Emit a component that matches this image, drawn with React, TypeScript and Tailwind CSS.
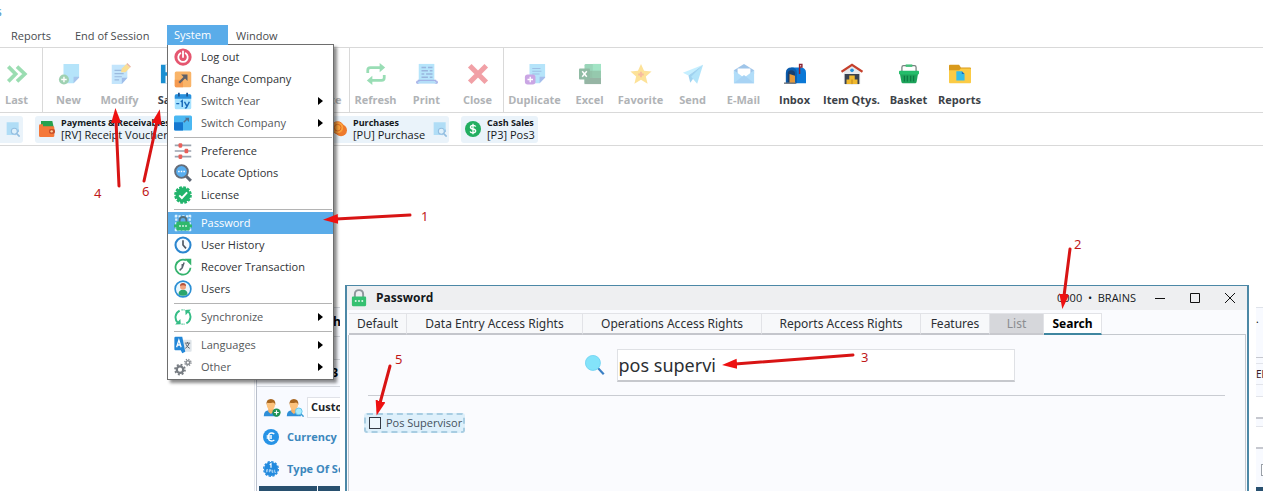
import React from "react";

type Kids = { children: React.ReactNode };

function Svg({ children, className = "size-[22px]" }: Kids & { className?: string }) {
  return (
    <svg viewBox="0 0 24 24" fill="none" className={`shrink-0 ${className}`} aria-hidden="true">
      {children}
    </svg>
  );
}

const sheet = "M4 2h18v13.5L16.5 21H4z";

/* ---------- Toolbar icons ---------- */

const LastIcon = () => (
  <Svg>
    <path d="M2.5 4 10.500 12l-8 8M12 4l8.500 8-8.500 8" stroke="#22b455" strokeWidth="4" />
  </Svg>
);
const NewIcon = () => (
  <Svg>
    <path d="M6 1h17v14l-6 7H6z" fill="#5cc5f5" />
    <path d="M23 15v1l-6 6v-7z" fill="#3b7fd6" />
    <circle cx="6.500" cy="18" r="5.500" fill="#2b9a55" />
    <path d="M6.500 15v6M3.500 18h6" stroke="#fff" strokeWidth="1.500" />
  </Svg>
);
const ModifyIcon = () => (
  <Svg>
    <path d="M3 2h17v14l-6 7H3z" fill="#7cc6fa" />
    <path d="M20 16l-6 7v-7z" fill="#2f6fd0" />
    <path d="M6 8h9M6 11.500h10M6 15h8M6 18.500h5" stroke="#2467b8" strokeWidth="1.300" />
    <path d="m13 10 1-4 5-5 4 4-5 5z" fill="#f4b916" />
    <path d="m19 1 1-1 4 4-1 1z" fill="#d0542f" />
  </Svg>
);
const SaveIcon = () => (
  <Svg>
    <path d="M1 2h19l3 3v17H1z" fill="#1a8fd1" />
    <path d="M6 2h12v8H6zM6 14h12v8H6z" fill="#fff" />
  </Svg>
);
const DeleteIcon = () => (
  <Svg>
    <path d="M4 6h16l-1.500 16h-13zM3 3h18v2H3z" fill="#e1453f" />
  </Svg>
);
const RefreshIcon = () => (
  <Svg>
    <path d="M3 11V8q0-3 3-3h12M21 13v3q0 3-3 3H6" stroke="#1fb65c" strokeWidth="3" />
    <path d="m16 0 6 5-6 5zM8 14l-6 5 6 5z" fill="#1fb65c" />
  </Svg>
);
const PrintIcon = () => (
  <Svg>
    <path d="M3 1h17v20H3z" fill="#5fc6f8" />
    <path d="M6 5h5M13 5h5M6 8.500h7M15 8.500h3M6 12h3M11 12h7M6 15.500h7M15 15.500h3" stroke="#1f5db5" strokeWidth="1.600" />
    <path d="M2 19h20" stroke="#3158c9" strokeWidth="1.500" />
    <circle cx="2" cy="21" r="2" fill="#4c5fcf" />
    <circle cx="22" cy="21" r="2" fill="#4c5fcf" />
    <path d="M2 21.500h20" stroke="#58b6f0" strokeWidth="2" />
  </Svg>
);
const CloseIcon = () => (
  <Svg>
    <path d="m3 3 18 18M21 3 3 21" stroke="#e22f3b" strokeWidth="5.500" />
  </Svg>
);
const DuplicateIcon = () => (
  <Svg>
    <path d="M6 1h17v14l-6 7H6z" fill="#5cc5f5" />
    <path d="M23 15v1l-6 6v-7z" fill="#3b6fd6" />
    <path d="M9 6h9M9 9h10M9 12h8" stroke="#2a73c4" strokeWidth="1.200" />
    <rect x="1" y="12.500" width="11.500" height="11" rx="3" fill="#8c3bc4" />
    <path d="M6.800 15v6M3.800 18h6" stroke="#fff" strokeWidth="1.500" />
  </Svg>
);
const ExcelIcon = () => (
  <Svg>
    <rect x="6" y="1" width="18" height="22" rx="1.500" fill="#21a366" />
    <path d="M15 1h9v7.500h-9z" fill="#33c481" />
    <path d="M6 8.500h9V16H6z" fill="#107c41" />
    <path d="M6 16h18v7H6z" fill="#185c37" />
    <path d="M15 8.500h9V16h-9z" fill="#17884c" />
    <rect x="0" y="6" width="12" height="12" rx="1" fill="#0c6b38" />
    <path d="m3.500 9 5 6M8.500 9l-5 6" stroke="#fff" strokeWidth="1.600" />
  </Svg>
);
const FavoriteIcon = () => (
  <Svg>
    <path d="m12 1 3.300 7.500 8.200.700-6.200 5.400 1.900 8L12 18.300l-7.200 4.300 1.900-8L.500 9.200l8.200-.700z" fill="#fbc01c" />
    <path d="M12 9.500v6M9 12.500h6" stroke="#ee6b2d" strokeWidth="2" />
  </Svg>
);
const SendIcon = () => (
  <Svg>
    <path d="M23 2 1 10.500l6 3z" fill="#7fdcff" />
    <path d="M23 2 7 13.500l2 8z" fill="#2f9ee0" />
    <path d="m23 2-13 13 6.500 7.500z" fill="#56c5f5" />
  </Svg>
);
const MailIcon = () => (
  <Svg>
    <path d="M1 8 12 1l11 7v4H1z" fill="#2d7fd0" />
    <path d="M5 6h14v10H5z" fill="#fff" />
    <path d="m1 8 11 8 11-8v14H1z" fill="#54b4f2" />
    <path d="m1 22 11-9 11 9z" fill="#3f9fe8" />
  </Svg>
);
const InboxIcon = () => (
  <Svg className="size-[22px]">
    <path d="M8 5h10q6 0 6 6v11H8z" fill="#0a78d6" />
    <path d="M2 11q0-6 6-6t6 6v11H2z" fill="#0b5cad" />
    <path d="M4 12q0-4 4-4t4 4v9H4z" fill="#173f70" />
    <path d="m6 12 6 2v8H6z" fill="#e59a3b" />
    <path d="M17 12V1.500h2.500v3H17" stroke="#8c2433" strokeWidth="1.600" />
    <path d="M0 22h13" stroke="#6b7078" strokeWidth="1.500" />
  </Svg>
);
const WarehouseIcon = () => (
  <Svg>
    <path d="M3 8 12 2.500 21 8v15H3z" fill="#e7e9ec" />
    <path d="M4 12h16v11H4z" fill="#3a4250" />
    <path d="M.500 9.500 12 2l11.500 7.500" stroke="#c5402c" strokeWidth="2.500" />
    <circle cx="12" cy="8" r="2" fill="#2492db" />
    <path d="M9 13.500h6v4.500H9zM6 18h12v5H6z" fill="#f0b92e" />
    <path d="M12 18v5" stroke="#b8801b" />
  </Svg>
);
const BasketIcon = () => (
  <Svg className="size-5">
    <path d="M3.500 10V4q0-2 2-2h13q2 0 2 2v6" stroke="#74817e" strokeWidth="1.500" />
    <path d="M8 2h8" stroke="#46c17c" strokeWidth="3" />
    <path d="M1 11h22l-2 11q-.200 1-1.200 1H4.200Q3.200 23 3 22z" fill="#1ea45b" />
    <rect x="0" y="8" width="24" height="4.500" rx="1" fill="#24bd6b" />
    <path d="M6.500 14v7M10 14v7M14 14v7M17.500 14v7" stroke="#0c7b43" strokeWidth="1.500" />
  </Svg>
);
const FolderIcon = () => (
  <Svg className="size-[22px]">
    <path d="M0 3q0-1 1-1h10l2 3h10q1 0 1 1v4H0z" fill="#d99a1c" />
    <path d="M0 8h11l2-2h10q1 0 1 1v14q0 1-1 1H1q-1 0-1-1z" fill="#fbcb45" />
    <path d="M8 9h6l3 3v7H8z" fill="#35bde8" />
    <path d="M14 9v3h3z" fill="#1b6fc0" />
  </Svg>
);

/* ---------- Shortcut icons ---------- */

const PageSearchIcon = () => (
  <Svg className="size-4 opacity-60">
    <path d={sheet} fill="#8ad0f5" />
    <path d="M22 12v4l-6 6" fill="#4f98d6" />
    <circle cx="15.500" cy="15.500" r="4.500" fill="#d7effc" stroke="#5a9bd0" strokeWidth="1.600" />
    <path d="m19 19 4.500 4.500" stroke="#5a9bd0" strokeWidth="2.400" />
  </Svg>
);
const WalletIcon = () => (
  <Svg className="size-4">
    <path d="M3 0h17l2 9H3z" fill="#27a14f" />
    <path d="M0 7q0-2 2-2h4v3h15q2 0 2 2v12q0 2-2 2H2q-2 0-2-2z" fill="#f5783a" />
    <rect x="15" y="12" width="9" height="7" rx="2.500" fill="#c74f2a" />
    <circle cx="19" cy="15.500" r="1.800" fill="#ffd2a0" />
  </Svg>
);
const CoinsIcon = () => (
  <Svg className="size-4">
    <circle cx="15" cy="14" r="9" fill="#ee7a2c" />
    <circle cx="10" cy="10" r="9" fill="#fda33c" stroke="#ee7a2c" strokeWidth="1.500" />
    <circle cx="10" cy="10" r="5" stroke="#e06b25" strokeWidth="1.500" />
  </Svg>
);
const DollarIcon = () => (
  <Svg className="size-4">
    <circle cx="12" cy="12" r="12" fill="#22ae60" />
    <path d="M16 8.500Q15.500 6.500 12 6.500T8.200 9t3.800 3 4 3-4 2.700T7.800 15.500M12 4v16" stroke="#fff" strokeWidth="2" />
  </Svg>
);

/* ---------- Menu icons ---------- */

const m = "size-[18px]";
const PowerIcon = () => (
  <Svg className={m}>
    <circle cx="12" cy="12" r="11.500" fill="#e5566f" />
    <path d="M8.500 7a6.300 6.300 0 1 0 7 0" stroke="#fff" strokeWidth="2.400" strokeLinecap="round" />
    <path d="M12 4.500v7.500" stroke="#fff" strokeWidth="2.400" strokeLinecap="round" />
  </Svg>
);
const ChangeIcon = () => (
  <Svg className={m}>
    <rect x="1" y="2" width="22" height="21" rx="2" fill="#f9b468" />
    <path d="M1 13h11v10H3q-2 0-2-2z" fill="#f59a50" />
    <path d="m7 17 9-9" stroke="#5d5f68" strokeWidth="3" />
    <path d="M9.500 6H18v8.500z" fill="#5d5f68" />
  </Svg>
);
const YearIcon = () => (
  <Svg className={m}>
    <rect x="1" y="3" width="22" height="20" rx="2" fill="#a6e2ff" />
    <path d="M1 5q0-2 2-2h18q2 0 2 2v4H1z" fill="#2a91dd" />
    <path d="M6.500 1v5M17.500 1v5" stroke="#1b5796" strokeWidth="2.400" />
    <path d="M3 15.500h4M9 13l2-1.500V20M14 13l3 5.500M20.500 13 17 20q-.500 1.500-2.500 1.500" stroke="#1768b8" strokeWidth="1.900" />
  </Svg>
);
const SwitchIcon = () => (
  <Svg className={m}>
    <rect x="0" y="2" width="24" height="20" rx="2" fill="#4bb8f2" />
    <path d="M0 11h12v11H2q-2 0-2-2z" fill="#1577cf" />
    <path d="m13 11 4-4" stroke="#4f6f8f" strokeWidth="2" />
    <path d="M14.500 5H20v5.500z" fill="#4f6f8f" />
  </Svg>
);
const SlidersIcon = () => (
  <Svg className={m}>
    <path d="M1 4.500h22M1 12h22M1 19.500h22" stroke="#9aa3ae" strokeWidth="2.200" />
    <g fill="#e9605a">
      <rect x="6" y="1.500" width="5" height="6" rx="1.500" />
      <rect x="14" y="9" width="5" height="6" rx="1.500" />
      <rect x="6" y="16.500" width="5" height="6" rx="1.500" />
    </g>
  </Svg>
);
const LocateIcon = () => (
  <Svg className={m}>
    <path d="m15 15 7.500 7.500" stroke="#5d6573" strokeWidth="4" />
    <circle cx="10" cy="10" r="8.500" fill="#58aef0" stroke="#656d79" strokeWidth="2.600" />
    <path d="M5.500 10h2M9 10h2M12.500 10h2" stroke="#fff" strokeWidth="2" />
  </Svg>
);
const LicenseIcon = () => (
  <Svg className={m}>
    <circle cx="12" cy="12" r="10" fill="#22b46c" />
    <circle cx="12" cy="12" r="10.500" stroke="#22b46c" strokeWidth="2.600" strokeDasharray="3.600 1.900" />
    <path d="m7 12.500 3.500 3.500L17.500 8.500" stroke="#fff" strokeWidth="2.600" />
  </Svg>
);
const LockIcon = ({ className }: { className: string }) => (
  <Svg className={className}>
    <path d="M6.500 12V7Q6.500 1.500 12 1.500T17.500 7v5" stroke="#8f979c" strokeWidth="2.600" />
    <path d="M4 10h16q1.500 0 1.500 1.500V21q0 2-2 2h-15q-2 0-2-2v-9.500Q2.500 10 4 10z" fill="#35c070" />
    <path d="M6.500 16h2.200M10.900 16h2.200M15.300 16h2.200" stroke="#fff" strokeWidth="2.200" />
  </Svg>
);
const PasswordIcon = () => (
  <Svg className={m}>
    <path d="M3 1v22M21 1v22M1 3h22M1 21h22" stroke="#d9f2ff" strokeWidth="3" strokeDasharray="3 2" />
    <path d="M7.500 11V8q0-4 4.500-4t4.500 4v3" stroke="#54707a" strokeWidth="2.400" />
    <rect x="3" y="10" width="18" height="12" rx="2" fill="#2fb86c" />
    <path d="M0 16h24" stroke="#2fb86c" strokeWidth="4" />
    <path d="M7 16h2M11 16h2M15 16h2" stroke="#fff" strokeWidth="2" />
  </Svg>
);
const ClockIcon = () => (
  <Svg className={m}>
    <circle cx="12" cy="12" r="10" fill="#f4faff" stroke="#2b86cf" strokeWidth="2.800" />
    <path d="M12 5.500V12l4 4.500" stroke="#4b5561" strokeWidth="2.200" />
  </Svg>
);
const RecoverIcon = () => (
  <Svg className={m}>
    <path d="M16 3A10 10 0 1 0 22 13" stroke="#35b36d" strokeWidth="2.400" />
    <path d="M14 1h9v9z" fill="#35b36d" />
    <path d="M13.500 6 11 13l-3.500 3.500M11 13V8" stroke="#59636e" strokeWidth="1.900" />
  </Svg>
);
const UsersIcon = () => (
  <Svg className={m}>
    <circle cx="12" cy="12" r="10.500" fill="#eaf8ff" stroke="#2b8fd4" strokeWidth="2.200" />
    <path d="M6 19q0-6 6-6t6 6q-2.500 2-6 2t-6-2z" fill="#2ba56c" />
    <circle cx="12" cy="9" r="4" fill="#f2a37c" />
    <path d="M8 8q0-4 4-4t4 4q-4-2-8 0z" fill="#b4523a" />
  </Svg>
);
const SyncIcon = () => (
  <Svg className={m}>
    <path d="M7.500 3.500A10 10 0 0 0 5 19.500M16.500 20.500A10 10 0 0 0 19 4.500" stroke="#35bd86" strokeWidth="2.600" />
    <path d="m1.500 22 7.500-.500-.500-7zM22.500 2l-7.500.500.500 7z" fill="#35bd86" />
    <path d="M10 2.500h4M10 21.500h4" stroke="#35bd86" strokeWidth="1.800" strokeDasharray="1.600 1.200" />
  </Svg>
);
const LanguageIcon = () => (
  <Svg className={m}>
    <path d="M11 5h11q1.500 0 1.500 1.500v13q0 1.500-1.500 1.500H11z" fill="#dfe5ea" />
    <path d="M2 1h9l4 20-4 2-2-4H2q-1.500 0-1.500-1.500v-15Q.500 1 2 1z" fill="#2287d8" />
    <path d="m3.500 15 3-9.500 3 9.500M4.500 12h4" stroke="#fff" strokeWidth="1.700" />
    <path d="M14.500 9.500h7M18 8v1.500M20 10q-1 4-5 6.500M16 11q1.500 4 5 5.500" stroke="#59626c" strokeWidth="1.300" />
  </Svg>
);
const GearsIcon = () => (
  <Svg className={m}>
    <circle cx="8" cy="15.500" r="4.300" stroke="#777c82" strokeWidth="3" />
    <circle cx="8" cy="15.500" r="6.600" stroke="#777c82" strokeWidth="2.400" strokeDasharray="2.600 2.580" />
    <circle cx="18.500" cy="6" r="2.500" stroke="#8b8f94" strokeWidth="2" />
    <circle cx="18.500" cy="6" r="4.200" stroke="#8b8f94" strokeWidth="1.800" strokeDasharray="1.700 1.600" />
  </Svg>
);

/* ---------- Form icons ---------- */

const Person = () => (
  <>
    <path d="M1 23q0-8 7-8h5q7 0 7 8z" fill="#2f8fd8" />
    <path d="M7 13h7v4l-3.500 3L7 17z" fill="#f7b267" />
    <ellipse cx="10.500" cy="8" rx="5.500" ry="6.500" fill="#fcc27c" />
    <path d="M4.500 8Q4 0 10.500 0t6 8q-1-3-3-3.500Q8 6 5.500 5z" fill="#a8661f" />
  </>
);
const PersonAddIcon = () => (
  <Svg className="size-[18px]">
    <Person />
    <circle cx="18" cy="18" r="5.500" fill="#1f9254" />
    <path d="M18 15v6M15 18h6" stroke="#fff" strokeWidth="1.600" />
  </Svg>
);
const PersonSearchIcon = () => (
  <Svg className="size-[18px]">
    <Person />
    <circle cx="17" cy="16.500" r="4.500" fill="#a6ecff" stroke="#62c3ea" strokeWidth="1.200" />
    <path d="m20 20 3.500 3.500" stroke="#3a9bd4" strokeWidth="2" />
  </Svg>
);
const EuroIcon = () => (
  <Svg className="size-4">
    <circle cx="12" cy="12" r="12" fill="#2793e6" />
    <path d="M17 7.500q-2-1.500-4-1.500-5 0-5 6t5 6q2 0 4-1.500M5.500 10.500h8M5.500 13.500h8" stroke="#fff" strokeWidth="2" />
  </Svg>
);
const BadgeIcon = () => (
  <Svg className="size-4">
    <circle cx="12" cy="12" r="10.500" fill="#238ade" />
    <circle cx="12" cy="12" r="11" stroke="#238ade" strokeWidth="2" strokeDasharray="3.500 2.260" />
    <path d="m10 5.500 2-1.500v6" stroke="#fff" strokeWidth="1.800" />
    <path d="M5.500 17v-4h2M5.500 15h2M9.500 17v-4h2v2h-2M13.500 13v4h2M13.500 15h2M17.500 13v4h2" stroke="#e5f5ff" strokeWidth="1" />
  </Svg>
);
const SearchIcon = () => (
  <Svg className="size-5">
    <path d="m15.500 15.500 7 7.500" stroke="#3a7fc4" strokeWidth="2.600" />
    <circle cx="9.500" cy="9.500" r="9" fill="#83e3fa" />
    <circle cx="9.500" cy="9.500" r="9" stroke="#6fd3f2" strokeWidth="1" />
  </Svg>
);

/* ---------- Building blocks ---------- */

function Tool({ icon, label, w = "w-[51px]", off = false }: { icon: React.ReactNode; label: string; w?: string; off?: boolean }) {
  return (
    <button type="button" disabled={off} className={`flex h-full shrink-0 flex-col items-center pt-[14px] ${w}`}>
      <span className={`flex h-6 items-center ${off ? "opacity-45" : ""}`}>{icon}</span>
      <span className={`mt-[5px] text-[11px] leading-[18px] font-bold whitespace-nowrap ${off ? "text-[#b0b3b6]" : "text-[#3c4248]"}`}>{label}</span>
    </button>
  );
}
const Divider = () => <div className="h-full w-px shrink-0 bg-[#d9d9d9]" />;

function Shortcut({ icon, title, text, w = "", search = false }: { icon: React.ReactNode; title: string; text: string; w?: string; search?: boolean }) {
  return (
    <button type="button" className={`flex h-[27px] shrink-0 items-center gap-[6px] rounded-[3px] bg-[#eaf3fa] px-1 text-left whitespace-nowrap text-[#15181b] ${w}`}>
      {icon}
      <span className="flex flex-col">
        <span className="text-[9px] leading-[11px] font-bold">{title}</span>
        <span className="text-[11px] leading-[13px]">{text}</span>
      </span>
      {search && <span className="ml-auto"><PageSearchIcon /></span>}
    </button>
  );
}

type Entry = { label: string; icon: React.ReactNode; sub?: boolean; active?: boolean };
const groups: Entry[][] = [
  [
    { label: "Log out", icon: <PowerIcon /> },
    { label: "Change Company", icon: <ChangeIcon /> },
    { label: "Switch Year", icon: <YearIcon />, sub: true },
    { label: "Switch Company", icon: <SwitchIcon />, sub: true },
  ],
  [
    { label: "Preference", icon: <SlidersIcon /> },
    { label: "Locate Options", icon: <LocateIcon /> },
    { label: "License", icon: <LicenseIcon /> },
  ],
  [
    { label: "Password", icon: <PasswordIcon />, active: true },
    { label: "User History", icon: <ClockIcon /> },
    { label: "Recover Transaction", icon: <RecoverIcon /> },
    { label: "Users", icon: <UsersIcon /> },
  ],
  [{ label: "Synchronize", icon: <SyncIcon />, sub: true }],
  [
    { label: "Languages", icon: <LanguageIcon />, sub: true },
    { label: "Other", icon: <GearsIcon />, sub: true },
  ],
];

function SystemMenu() {
  return (
    <div role="menu" className="absolute top-[19px] left-0 z-20 w-[167px] border border-[#6e6e6e] bg-white py-px font-['Open_Sans',sans-serif] shadow-[3px_3px_3px_rgba(0,0,0,0.45)]">
      {groups.map((g, i) => (
        <div key={i} role="group">
          {i > 0 && (
            <div className="flex h-[6px] items-center pr-px pl-[6px]">
              <div className="h-px w-full bg-[#b4b4b4]" />
            </div>
          )}
          {g.map((e) => (
            <button
              key={e.label}
              role="menuitem"
              type="button"
              className={`flex h-[22px] w-full items-center gap-[9px] pr-[10px] pl-[6px] text-[11px] whitespace-nowrap ${e.active ? "bg-[#5aace9] text-white" : e.sub ? "text-[#55585b]" : "text-[#303336]"}`}
            >
              {e.icon}
              {e.label}
              {e.sub && <span className="ml-auto border-y-[4px] border-l-[5px] border-y-transparent border-l-black" />}
            </button>
          ))}
        </div>
      ))}
    </div>
  );
}

const tabs: { label: string; w: string; state?: "off" | "on" }[] = [
  { label: "Default", w: "w-[58px]" },
  { label: "Data Entry Access Rights", w: "w-[176px]" },
  { label: "Operations Access Rights", w: "w-[179px]" },
  { label: "Reports Access Rights", w: "w-[159px]" },
  { label: "Features", w: "w-[69px]" },
  { label: "List", w: "w-[54px]", state: "off" },
  { label: "Search", w: "w-[58px]", state: "on" },
];

function PasswordWindow() {
  return (
    <div className="absolute top-[138px] right-[7px] bottom-0 left-[340px] flex bg-white pr-[7px] pl-[5px]">
      <section className="mt-px flex min-w-0 grow flex-col border-x-2 border-t border-[#4c88a6] bg-[#fafbfe]">
        <header className="flex h-6 shrink-0 items-center bg-[#eeeff1] pl-[3px] text-[#15181b]">
          <LockIcon className="size-[18px]" />
          <h1 className="ml-2 font-['Open_Sans',sans-serif] text-[12px] font-bold">Password</h1>
          <span className="ml-auto font-['Open_Sans',sans-serif] text-[11px] whitespace-pre">0000  •  BRAINS</span>
          <button type="button" aria-label="Minimize" className="ml-[19px]">
            <svg viewBox="0 0 10 10" className="size-[10px]" stroke="#111"><path d="M0 5.500h10" /></svg>
          </button>
          <button type="button" aria-label="Maximize" className="ml-[25px]">
            <svg viewBox="0 0 10 10" className="size-[10px]" fill="none" stroke="#111"><path d="M.5.5h9v9h-9z" /></svg>
          </button>
          <button type="button" aria-label="Close" className="mr-3 ml-[25px]">
            <svg viewBox="0 0 10 10" className="size-[10px]" stroke="#111"><path d="m0 0 10 10M10 0 0 10" /></svg>
          </button>
        </header>
        <div role="tablist" className="mt-[3px] ml-[2px] flex h-[22px] shrink-0 text-[12px] leading-[17px]">
          {tabs.map((t) => (
            <button
              key={t.label}
              role="tab"
              type="button"
              aria-selected={t.state === "on"}
              className={`shrink-0 border-t border-r border-[#e2e3e7] border-b-2 whitespace-nowrap ${t.w} ${
                t.state === "on"
                  ? "border-b-[#3f86a0] bg-white font-bold text-black"
                  : t.state === "off"
                    ? "border-b-[#c8c9ce] bg-[#d6d7db] text-[#8b8d90]"
                    : "border-b-[#c4c6cc] bg-[#f7f8fa] text-[#2c2f33]"
              }`}
            >
              {t.label}
            </button>
          ))}
          <div className="mr-px grow border-b border-[#c4c8ce]" />
        </div>
        <div className="mx-px grow border-x border-[#c4c8ce] px-4">
          <div className="mr-1 ml-[3px] flex h-[61px] justify-center border-b border-[#c9ccd2] pt-[14px] pl-[6px]">
            <label htmlFor="find" aria-label="Search" className="mt-[6px] mr-3"><SearchIcon /></label>
            <input id="find" defaultValue="pos supervi" className="h-[33px] w-[398px] border border-b-2 border-[#dfe1e5] border-b-[#c6c8cd] bg-white px-px text-[18px] text-[#2c2f33] outline-none" />
          </div>
          <label className="mt-[17px] -ml-px inline-flex h-5 items-center gap-[5px] rounded-[3px] border-2 border-dashed border-[#a8cde2] bg-[#def0fb] pr-px pl-[3px] font-['Open_Sans',sans-serif] text-[11px] whitespace-nowrap text-[#44515c]">
            <input type="checkbox" className="size-3 appearance-none border border-[#333a44] bg-[#eef7fd]" />
            Pos Supervisor
          </label>
        </div>
      </section>
    </div>
  );
}

function VoucherForm() {
  return (
    <div className="absolute top-[161px] right-0 bottom-0 left-[254px] flex overflow-hidden border-l border-[#e4e7ee]">
      <div className="ml-px flex w-[85px] shrink-0 flex-col overflow-hidden border-l border-[#b9bfcb] bg-[#f8faff] font-['Open_Sans',sans-serif] text-[12px] *:shrink-0">
        <div className="flex h-[30px] items-center justify-end border-t border-b border-[#d4d8df] font-bold">h</div>
        <div className="mt-[22px] flex h-7 items-center justify-end border-y border-[#d4d8df] pr-[3px] font-bold">3</div>
        <div className="mt-[10px] flex h-[21px] items-center pl-[6px]">
          <PersonAddIcon />
          <span className="ml-[5px]"><PersonSearchIcon /></span>
          <span className="ml-[3px] flex h-[21px] w-10 items-center border border-[#e0e2e8] bg-white pl-[3px] text-[11px] font-bold text-[#22252a]">Custo</span>
        </div>
        <div className="mt-[9px] flex h-5 items-center gap-2 pl-[6px] text-[11px] font-bold text-[#3c87bd]"><EuroIcon />Currency</div>
        <div className="mt-3 flex h-5 items-center gap-2 pl-[6px] text-[11px] font-bold whitespace-nowrap text-[#3c87bd]"><BadgeIcon />Type Of Se</div>
        <div className="mt-[7px] ml-[2px] flex h-8 gap-px">
          <div className="w-[58px] shrink-0 bg-[#28506f]" />
          <div className="grow bg-[#28506f]" />
        </div>
      </div>
      <div className="ml-auto flex w-[7px] shrink-0 flex-col overflow-hidden border-t border-[#dfe3ea] bg-[#f8faff] text-[10px] text-[#3a2028] *:shrink-0">
        <div className="h-[50px] border-b border-[#c6c8cf] pt-1 text-black">.</div>
        <div className="mt-[5px] flex h-[22px] items-center border-y border-[#e2e4ea]">El</div>
        <div className="mt-[11px] h-[23px] border-t border-b-2 border-[#e2e4ea] border-b-[#c6c8cf] bg-white" />
        <div className="mt-[7px] h-[23px] border-t border-b-2 border-[#e2e4ea] border-b-[#c6c8cf] bg-white" />
        <div className="mt-[15px] ml-[5px] h-3 w-3 border border-[#9aa0a8] bg-white" />
        <div className="mt-[11px] h-8 bg-[#28506f]" />
      </div>
    </div>
  );
}

const arrows = [
  "M410 215 L336 219",
  "M1070 249 L1064 296",
  "M853 355 L735 364",
  "M119 186 L116 121",
  "M390 366 L380 403",
  "M144 181 L157 122",
];

function Annotations() {
  return (
    <div className="pointer-events-none absolute inset-0 z-30 text-[13px] leading-4 text-[#c01818]">
      <svg className="absolute top-0 left-0 h-full w-full" fill="none" aria-hidden="true">
        <defs>
          <marker id="tip" markerUnits="userSpaceOnUse" markerWidth="16" markerHeight="12" refX="2" refY="5" orient="auto">
            <path d="M0 0 15 5 0 10z" fill="#ee1111" />
          </marker>
        </defs>
        {arrows.map((d) => (
          <path key={d} d={d} stroke="#d81414" strokeWidth="3" strokeLinecap="round" markerEnd="url(#tip)" />
        ))}
      </svg>
      <span className="absolute top-[208px] left-[421px]">1</span>
      <span className="absolute top-[236px] left-[1074px]">2</span>
      <span className="absolute top-[349px] left-[861px]">3</span>
      <span className="absolute top-[185px] left-[94px]">4</span>
      <span className="absolute top-[351px] left-[395px]">5</span>
      <span className="absolute top-[183px] left-[142px]">6</span>
    </div>
  );
}

export default function App() {
  return (
    <div className="relative flex min-h-screen flex-col overflow-hidden bg-white font-['Noto_Sans',sans-serif]">
      <div className="h-[25px] overflow-hidden text-[12px] leading-[24px] text-[#4a94c4]">
        <span className="-ml-1">s</span>
      </div>
      <nav className="flex h-[23px] items-stretch border-b border-[#d9d9d9] font-['Open_Sans',sans-serif] text-[11px] whitespace-nowrap text-[#484b4e]">
        <button type="button" className="w-[75px] pl-[11px] text-left">Reports</button>
        <button type="button" className="w-[92px] text-left">End of Session</button>
        <div className="relative">
          <button type="button" className="relative z-30 h-5 w-[61px] bg-[#5aace9] pt-px pl-[7px] text-left text-white">System</button>
          <SystemMenu />
        </div>
        <button type="button" className="ml-2">Window</button>
      </nav>
      <div className="flex h-[65px] border-b border-[#d9d9d9] font-['Open_Sans',sans-serif]">
        <Tool icon={<LastIcon />} label="Last" w="w-[33px]" off />
        <div className="w-[9px] shrink-0" />
        <Divider />
        <Tool icon={<NewIcon />} label="New" off />
        <Tool icon={<ModifyIcon />} label="Modify" off />
        <Tool icon={<SaveIcon />} label="Save" />
        <div className="w-[102px] shrink-0" />
        <Tool icon={<DeleteIcon />} label="Delete" off />
        <Divider />
        <Tool icon={<RefreshIcon />} label="Refresh" off />
        <Tool icon={<PrintIcon />} label="Print" off />
        <Tool icon={<CloseIcon />} label="Close" off />
        <Divider />
        <Tool icon={<DuplicateIcon />} label="Duplicate" w="w-[61px]" off />
        <Tool icon={<ExcelIcon />} label="Excel" off w="w-[49px]" />
        <Tool icon={<FavoriteIcon />} label="Favorite" w="w-[53px]" off />
        <Tool icon={<SendIcon />} label="Send" off />
        <Tool icon={<MailIcon />} label="E-Mail" off />
        <Tool icon={<InboxIcon />} label="Inbox" />
        <Tool icon={<WarehouseIcon />} label="Item Qtys." w="w-[63px]" />
        <Tool icon={<BasketIcon />} label="Basket" />
        <Tool icon={<FolderIcon />} label="Reports" />
      </div>
      <div className="flex h-[33px] items-center border-b border-[#d9d9d9] font-['Open_Sans',sans-serif]">
        <button type="button" aria-label="Find voucher" className="mr-3 flex h-[27px] w-[23px] shrink-0 items-center rounded-r-[3px] bg-[#eaf3fa] pl-1"><PageSearchIcon /></button>
        <Shortcut icon={<WalletIcon />} title="Payments & Receivables" text="[RV] Receipt Voucher" w="w-[180px]" search />
        <div className="w-[112px] shrink-0" />
        <Shortcut icon={<CoinsIcon />} title="Purchases" text="[PU] Purchase" w="mr-3 w-[122px]" search />
        <Shortcut icon={<DollarIcon />} title="Cash Sales" text="[P3] Pos3" w="w-[77px]" />
      </div>
      <main className="relative min-h-[345px] grow">
        <VoucherForm />
        <PasswordWindow />
      </main>
      <Annotations />
    </div>
  );
}
